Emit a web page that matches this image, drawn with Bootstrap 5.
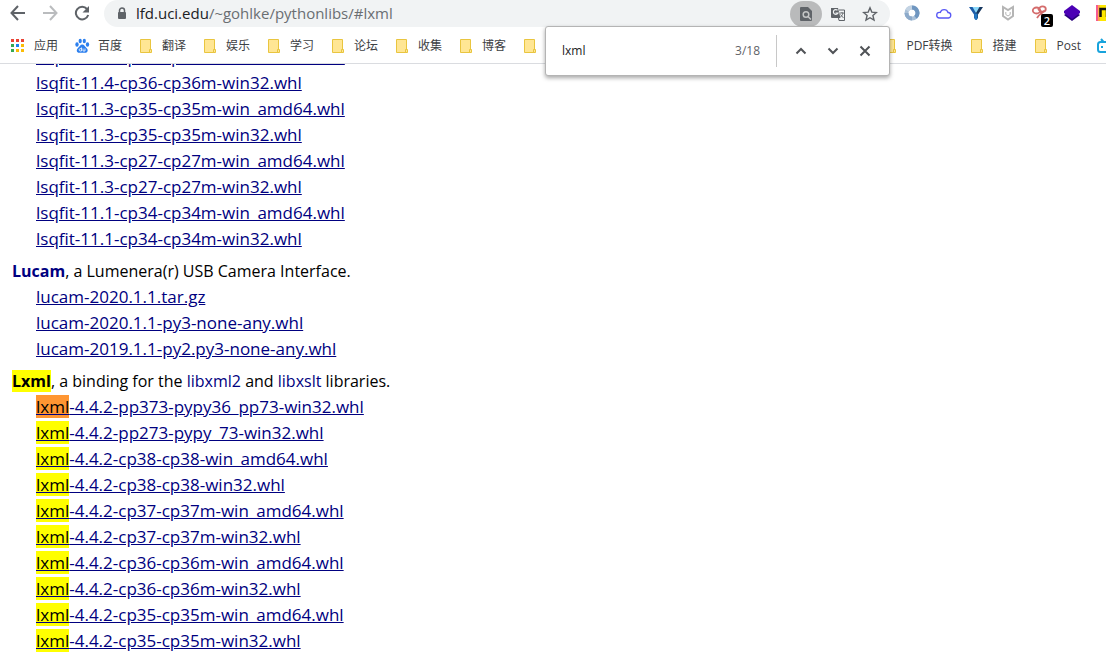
<!DOCTYPE html>
<html lang="zh-CN">
<head>
<meta charset="utf-8">
<meta name="viewport" content="width=device-width, initial-scale=1">
<title>lfd.uci.edu/~gohlke/pythonlibs/#lxml</title>
<link href="https://cdn.jsdelivr.net/npm/bootstrap@5.3.0/dist/css/bootstrap.min.css" rel="stylesheet">
<script src="https://cdn.jsdelivr.net/npm/bootstrap@5.3.0/dist/js/bootstrap.bundle.min.js" defer></script>
<style>
body { font-family: "Open Sans", "Noto Sans CJK SC", sans-serif; font-size: 16px; line-height: 26px; color: #000; }
.chrome { z-index: 10; border-bottom: 1px solid #dadce0; line-height: 16px; }
.toolbar { height: 27px; }
.icon-btn { width: 32px; height: 26px; padding: 0; border: 0; background: none; display: flex; align-items: center; justify-content: center; flex: none; position: relative; }
.icon-btn svg, .bookmarks svg { display: block; flex: none; }
.nav-btns { padding: 0 6px 0 2px; }
.omnibox { background: #f1f3f4; border-radius: 14px; height: 27px; padding-left: 12px; }
.omnibox .url { font-size: 15px; line-height: 25px; color: #202124; outline: 0; }
.omnibox .path { color: #6a6e72; }
.omnibox .in-use { background: #b9babb; border-radius: 13px; }
.findbar { top: 26px; width: 345px; height: 50px; z-index: 20; background: #fff; border: 1px solid #b4b4b4; border-radius: 3px; box-shadow: 0 2px 4px rgba(0,0,0,.35); font-size: 12px; color: #5f6368; padding: 0 8px 0 16px; }
.findbar input { border: 0; padding: 0; outline: 0; color: #202124; min-width: 0; }
.findbar .rule { width: 1px; height: 32px; background: #c8c8c8; }
.bookmarks { height: 36px; font-size: 12px; padding: 2px 0 0 10px; }
.bookmarks a { color: #3c4043; text-decoration: none; white-space: nowrap; }
.bookmarks .trailing { width: 223px; margin-right: -7px; }
.extensions { width: 216px; padding-left: 6px; overflow: hidden; }
.count-badge { left: 17px; top: 14px; width: 12px; height: 13px; border-radius: 2px; background: #000; color: #fff; font-size: 11px; line-height: 13px; font-weight: 600; }
.page { padding: 0 12px; }
.page a { color: #000080; }
.page h2 { font-size: 16px; line-height: 26px; font-weight: 400; margin: 0; }
.page h2 a { text-decoration: none; }
.page ul { padding-left: 24px; margin-bottom: 6px; font-size: 17px; }
.page .scrolled { margin-top: -20px; }
.page mark { padding: 0; background: #ff0; color: #000; }
.page mark.current { background: #ff9632; }
</style>
</head>
<body class="vh-100 overflow-hidden bg-white d-flex flex-column">
<svg class="d-none" aria-hidden="true">
  <symbol id="folder" viewBox="0 0 16 16"><path d="M2.500 1.500h10v13h-10z" fill="#ffe694" stroke="#e9c53f"/><path d="M11.500 11.500h2v3h-2z" fill="#ffe694" stroke="#e9c53f"/></symbol>
</svg>
<header class="chrome bg-white position-relative flex-shrink-0">
  <div class="toolbar d-flex">
    <nav class="nav-btns d-flex" aria-label="导航">
      <button class="icon-btn" type="button" aria-label="后退"><svg width="16" height="16" viewBox="0 0 16 16" fill="none" stroke="#5f6368" stroke-width="2"><path d="M15 8H2M8 1 1.500 8 8 15"/></svg></button>
      <button class="icon-btn" type="button" aria-label="前进"><svg width="16" height="16" viewBox="0 0 16 16" fill="none" stroke="#babcbe" stroke-width="2"><path d="M1 8h13M8 1l6.500 7L8 15"/></svg></button>
      <button class="icon-btn" type="button" aria-label="重新加载"><svg width="16" height="16" viewBox="0 0 16 16"><path d="M13 4a6.300 6.300 0 1 0 1.200 6" fill="none" stroke="#5f6368" stroke-width="2"/><path d="M15 1v6.500H8.500z" fill="#5f6368"/></svg></button>
    </nav>
    <div class="omnibox position-relative flex-grow-1 d-flex align-items-center">
      <svg width="12" height="14" viewBox="0 0 12 14"><path d="M3.500 6V3.500a2.500 2.500 0 0 1 5 0V6" fill="none" stroke="#5f6368" stroke-width="1.500"/><rect x="2" y="5" width="8" height="7" rx="1" fill="#5f6368"/></svg>
      <div class="url flex-grow-1 ms-2" role="textbox" aria-label="地址" contenteditable="true" spellcheck="false">lfd.uci.edu<span class="path">/~gohlke/pythonlibs/#lxml</span></div>
      <button class="icon-btn in-use" type="button" aria-label="在网页上查找"><svg width="16" height="16" viewBox="0 0 16 16"><path d="M3 1h7l4 4v9a1 1 0 0 1-1 1H3a1 1 0 0 1-1-1V2a1 1 0 0 1 1-1z" fill="#5f6368"/><circle cx="8" cy="8.500" r="2.800" fill="none" stroke="#c4c5c6" stroke-width="1.500"/><path d="m10 10.500 3 3" stroke="#c4c5c6" stroke-width="1.500"/></svg></button>
      <button class="icon-btn" type="button" aria-label="翻译此页"><svg width="16" height="16" viewBox="0 0 16 16"><path d="M1 2h7l2.500 10H2a1 1 0 0 1-1-1z" fill="#5f6368"/><path d="M7.500 4.200A2.400 2.400 0 1 0 8 7H5.500" fill="none" stroke="#f1f3f4" stroke-width="1.200"/><path d="M9 4h5.500v10.500H9l-.5-2.500" fill="none" stroke="#5f6368"/><path d="M9.500 7H14M12 6v1M13 7c-.5 2-1.500 3-2.500 4M10.500 8.500l3 3.500" fill="none" stroke="#5f6368" stroke-width=".9"/></svg></button>
      <button class="icon-btn me-1" type="button" aria-label="收藏"><svg width="16" height="16" viewBox="0 0 16 16"><path d="m8 1.800 1.800 4.300 4.600.4-3.500 3 1.100 4.600L8 11.700 4 14.100l1.100-4.600-3.500-3 4.600-.4z" fill="none" stroke="#5f6368" stroke-width="1.400"/></svg></button>
      <form class="findbar position-absolute end-0 d-flex align-items-center" role="search" onsubmit="return false">
        <input class="flex-grow-1" type="text" value="lxml" aria-label="查找">
        <span class="me-3">3/18</span>
        <span class="rule me-2"></span>
        <button class="icon-btn" type="button" aria-label="上一个"><svg width="12" height="12" viewBox="0 0 12 12" fill="none" stroke="#505357" stroke-width="2"><path d="m1.500 8.500 4.500-4.500 4.500 4.500"/></svg></button>
        <button class="icon-btn" type="button" aria-label="下一个"><svg width="12" height="12" viewBox="0 0 12 12" fill="none" stroke="#505357" stroke-width="2"><path d="m1.500 3.500 4.500 4.500 4.500-4.500"/></svg></button>
        <button class="icon-btn" type="button" aria-label="关闭"><svg width="12" height="12" viewBox="0 0 12 12" fill="none" stroke="#505357" stroke-width="2"><path d="m1.500 1.500 9 9m0-9-9 9"/></svg></button>
      </form>
    </div>
    <div class="extensions d-flex">
      <button class="icon-btn" type="button" aria-label="扩展 1"><svg width="16" height="16" viewBox="0 0 16 16" fill="none" stroke-width="4"><circle cx="8" cy="8" r="5.500" stroke="#a9c0d8"/><path d="M8 2.500a5.500 5.500 0 0 1 3.500 9.700" stroke="#6f96c0"/><path d="M8 13.500A5.500 5.500 0 0 1 2.500 8" stroke="#8daaca"/><path d="M3 5.500A5.500 5.500 0 0 1 8 2.500" stroke="#c3d3e3"/></svg></button>
      <button class="icon-btn" type="button" aria-label="扩展 2"><svg width="16" height="16" viewBox="0 0 16 16" fill="none" stroke="#5858f5" stroke-width="1.300"><path d="M3.500 13a2.800 2.800 0 0 1 0-5.600c.3 0 .5 0 .8.100A4 4 0 0 1 12 7.500h.5a2.800 2.800 0 0 1 0 5.500z"/></svg></button>
      <button class="icon-btn" type="button" aria-label="扩展 3"><svg width="16" height="16" viewBox="0 0 16 16"><path d="M1 2h5l3 6v7l-3-2V9.500z" fill="#1d5ca8"/><path d="M15 2h-5L7.500 8v7l2.500-2V9.500z" fill="#16365f"/><path d="M4.500 2h7L8 8z" fill="#8ad8fa"/><path d="M6.500 8.500h3V14L8 15l-1.500-1z" fill="#2378c4"/></svg></button>
      <button class="icon-btn" type="button" aria-label="扩展 4"><svg width="16" height="16" viewBox="0 0 16 16" fill="none" stroke="#b5b5b5" stroke-width="2"><path d="M3 2v9l5 3.500 5-3.500V2L8 5z"/><path d="M5.800 7v2.500L8 11l2.200-1.500V7" stroke-width="1"/></svg></button>
      <button class="icon-btn" type="button" aria-label="扩展 5"><svg width="18" height="16" viewBox="0 0 18 16" fill="none" stroke="#d46c6c" stroke-width="1.800"><ellipse cx="5.500" cy="5.500" rx="3.700" ry="3"/><ellipse cx="11.500" cy="4" rx="3.300" ry="2.700"/><path d="M7 3.500c2 2.500 3 4 5 8M13.500 6c-2.500 2-5 3-7.500 7"/></svg><span class="count-badge position-absolute">2</span></button>
      <button class="icon-btn" type="button" aria-label="扩展 6"><svg width="18" height="18" viewBox="0 0 18 18"><path d="m1 11 8-5 8 5-8 6z" fill="#29007c"/><path d="m1 7 8-6 8 6v2l-8 6-8-6z" fill="#4b00b5"/></svg></button>
      <button class="icon-btn" type="button" aria-label="扩展 7"><svg width="16" height="16" viewBox="0 0 16 16"><path d="M0 0h16v16H0z" fill="#ffe800"/><path d="M0 0h2v16H0z" fill="#f65a91"/><path d="M2 0h2v16H2z" fill="#ffa64a"/><path d="M4.500 12V4H11v8" fill="none" stroke="#111" stroke-width="2.500"/></svg></button>
    </div>
  </div>
  <nav class="bookmarks d-flex align-items-center gap-3 overflow-hidden" aria-label="书签">
    <a class="d-flex align-items-center gap-2" href="#"><svg width="16" height="16" viewBox="0 0 16 16"><path d="M1 1h3v3H1z" fill="#ea4335"/><path d="M6 1h3v3H6z" fill="#ea4335"/><path d="M11 1h3v3h-3z" fill="#ea4335"/><path d="M1 6h3v3H1z" fill="#34a853"/><path d="M6 6h3v3H6z" fill="#1a83f0"/><path d="M11 6h3v3h-3z" fill="#fbbc05"/><path d="M1 11h3v3H1z" fill="#34a853"/><path d="M6 11h3v3H6zM11 11h3v3h-3z" fill="#fbbc05"/></svg>应用</a>
    <a class="d-flex align-items-center gap-2" href="#"><svg width="16" height="16" viewBox="0 0 16 16" fill="#2b7fee"><ellipse cx="3" cy="6.500" rx="1.700" ry="2.200"/><ellipse cx="6.200" cy="3" rx="1.600" ry="2.200"/><ellipse cx="10.300" cy="3" rx="1.600" ry="2.200"/><ellipse cx="13.500" cy="6.500" rx="1.700" ry="2.200"/><path d="M8.200 6.500c2.300 0 2.500 2 4.300 3.500 2.200 1.800 1.200 5-1.500 4.800-2-.2-3.500-.2-5.500 0-3 .2-3.500-3.200-1.500-4.800C6 8.500 6 6.500 8.200 6.500z"/><path d="M7.500 9.500V13H6a1.200 1.200 0 0 1 0-2.300h1.500M9 10.500V13h2v-2.500" fill="none" stroke="#fff" stroke-width=".8"/></svg>百度</a>
    <a class="d-flex align-items-center gap-2" href="#"><svg width="16" height="16"><use href="#folder"/></svg>翻译</a>
    <a class="d-flex align-items-center gap-2" href="#"><svg width="16" height="16"><use href="#folder"/></svg>娱乐</a>
    <a class="d-flex align-items-center gap-2" href="#"><svg width="16" height="16"><use href="#folder"/></svg>学习</a>
    <a class="d-flex align-items-center gap-2" href="#"><svg width="16" height="16"><use href="#folder"/></svg>论坛</a>
    <a class="d-flex align-items-center gap-2" href="#"><svg width="16" height="16"><use href="#folder"/></svg>收集</a>
    <a class="d-flex align-items-center gap-2" href="#"><svg width="16" height="16"><use href="#folder"/></svg>博客</a>
    <a href="#" aria-label="文件夹"><svg width="16" height="16"><use href="#folder"/></svg></a>
    <div class="trailing d-flex justify-content-end gap-3 ms-auto flex-shrink-0">
      <a class="d-flex align-items-center gap-2" href="#"><svg width="16" height="16"><use href="#folder"/></svg>PDF转换</a>
      <a class="d-flex align-items-center gap-2" href="#"><svg width="16" height="16"><use href="#folder"/></svg>搭建</a>
      <a class="d-flex align-items-center gap-2" href="#"><svg width="16" height="16"><use href="#folder"/></svg>Post</a>
      <a href="#" aria-label="视频"><svg width="16" height="16" viewBox="0 0 16 16" fill="none" stroke="#18a3dc" stroke-width="2"><rect x="1" y="4" width="14" height="10" rx="2.500"/><path d="m4 1 2.500 3M12 1 9.500 4M5 8v2M11 8v2"/></svg></a>
    </div>
  </nav>
</header>
<main class="page flex-fill overflow-hidden">
  <ul class="list-unstyled scrolled">
    <li><a href="#">lsqfit-11.4-cp36-cp36m-win_amd64.whl</a></li>
    <li><a href="#">lsqfit-11.4-cp36-cp36m-win32.whl</a></li>
    <li><a href="#">lsqfit-11.3-cp35-cp35m-win_amd64.whl</a></li>
    <li><a href="#">lsqfit-11.3-cp35-cp35m-win32.whl</a></li>
    <li><a href="#">lsqfit-11.3-cp27-cp27m-win_amd64.whl</a></li>
    <li><a href="#">lsqfit-11.3-cp27-cp27m-win32.whl</a></li>
    <li><a href="#">lsqfit-11.1-cp34-cp34m-win_amd64.whl</a></li>
    <li><a href="#">lsqfit-11.1-cp34-cp34m-win32.whl</a></li>
  </ul>
  <h2><a href="#"><b>Lucam</b></a>, a Lumenera(r) USB Camera Interface.</h2>
  <ul class="list-unstyled">
    <li><a href="#">lucam-2020.1.1.tar.gz</a></li>
    <li><a href="#">lucam-2020.1.1-py3-none-any.whl</a></li>
    <li><a href="#">lucam-2019.1.1-py2.py3-none-any.whl</a></li>
  </ul>
  <h2><a href="#"><b><mark>Lxml</mark></b></a>, a binding for the <a href="#">libxml2</a> and <a href="#">libxslt</a> libraries.</h2>
  <ul class="list-unstyled">
    <li><a href="#"><mark class="current">lxml</mark>-4.4.2-pp373-pypy36_pp73-win32.whl</a></li>
    <li><a href="#"><mark>lxml</mark>-4.4.2-pp273-pypy_73-win32.whl</a></li>
    <li><a href="#"><mark>lxml</mark>-4.4.2-cp38-cp38-win_amd64.whl</a></li>
    <li><a href="#"><mark>lxml</mark>-4.4.2-cp38-cp38-win32.whl</a></li>
    <li><a href="#"><mark>lxml</mark>-4.4.2-cp37-cp37m-win_amd64.whl</a></li>
    <li><a href="#"><mark>lxml</mark>-4.4.2-cp37-cp37m-win32.whl</a></li>
    <li><a href="#"><mark>lxml</mark>-4.4.2-cp36-cp36m-win_amd64.whl</a></li>
    <li><a href="#"><mark>lxml</mark>-4.4.2-cp36-cp36m-win32.whl</a></li>
    <li><a href="#"><mark>lxml</mark>-4.4.2-cp35-cp35m-win_amd64.whl</a></li>
    <li><a href="#"><mark>lxml</mark>-4.4.2-cp35-cp35m-win32.whl</a></li>
  </ul>
</main>
</body>
</html>
